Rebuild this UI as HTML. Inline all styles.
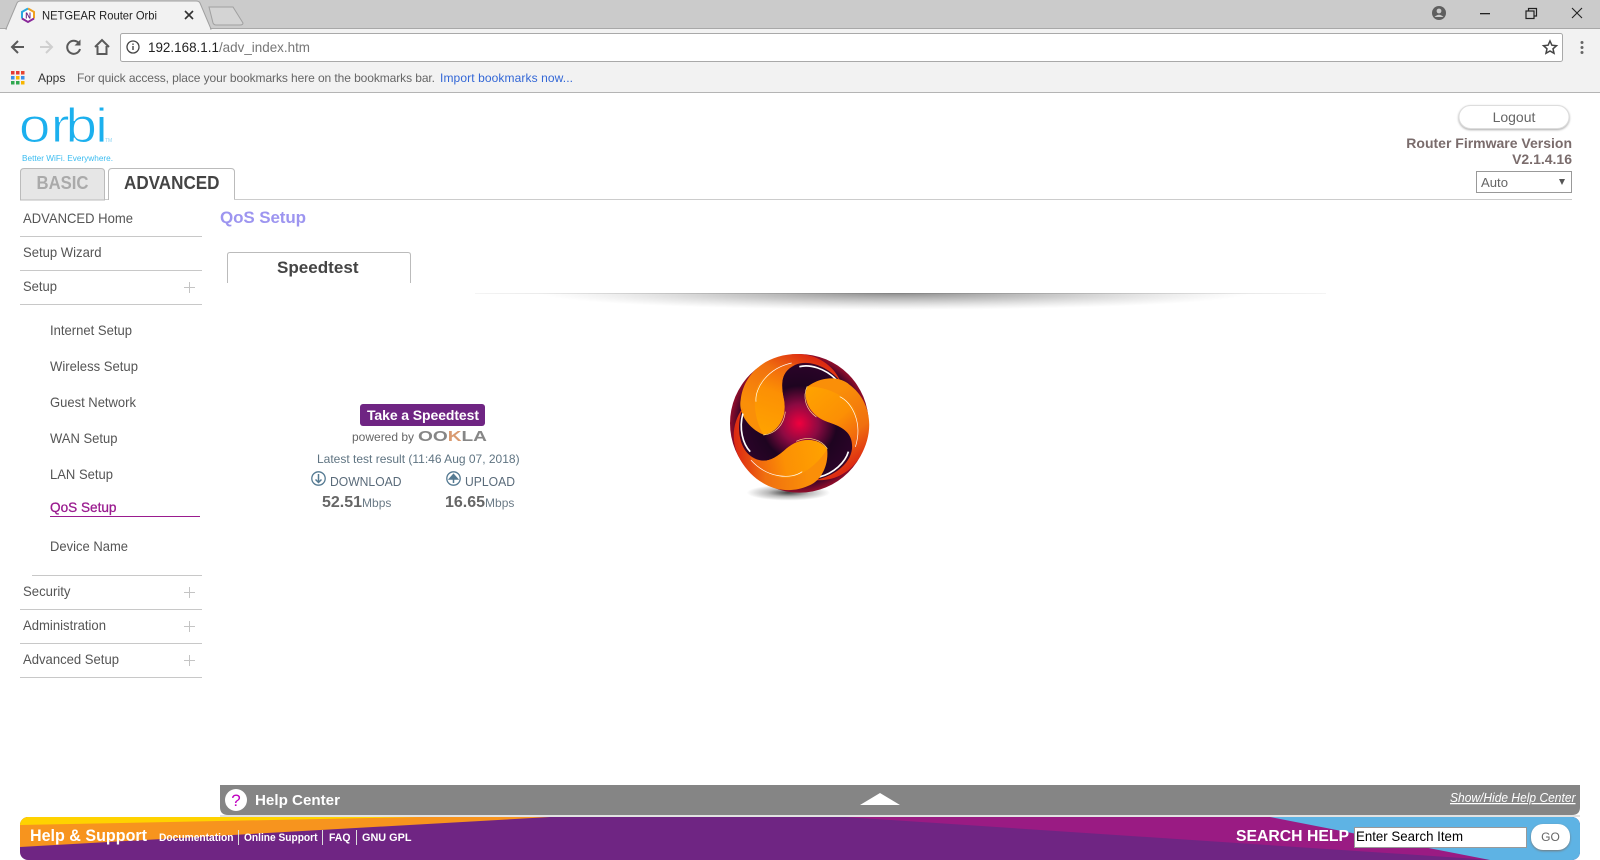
<!DOCTYPE html>
<html><head><meta charset="utf-8"><title>NETGEAR Router Orbi</title>
<style>
html,body{margin:0;padding:0;width:1600px;height:860px;overflow:hidden;background:#fff}
svg{display:block}
text{font-family:"Liberation Sans",sans-serif}
.m{font-size:14px;fill:#555}
.b{font-weight:bold}
.f{font-size:11px;font-weight:bold;fill:#fff}
</style></head><body>
<svg width="1600" height="860" viewBox="0 0 1600 860" xmlns="http://www.w3.org/2000/svg">
<defs>
<radialGradient id="sh" gradientUnits="userSpaceOnUse" cx="0" cy="0" r="1" gradientTransform="translate(895 293) scale(355 17)">
<stop offset="0" stop-color="#777" stop-opacity=".85"/><stop offset=".5" stop-color="#888" stop-opacity=".42"/><stop offset="1" stop-color="#aaa" stop-opacity="0"/></radialGradient>
<linearGradient id="ln"><stop offset="0" stop-color="#f4f4f4"/><stop offset=".5" stop-color="#bbb"/><stop offset="1" stop-color="#f4f4f4"/></linearGradient>
<radialGradient id="core" cx="268" cy="250" r="205" gradientUnits="userSpaceOnUse">
<stop offset="0" stop-color="#f0003e"/><stop offset=".28" stop-color="#8c0a42"/><stop offset=".55" stop-color="#1e0420"/><stop offset=".85" stop-color="#2a0428"/><stop offset="1" stop-color="#8a0c2a"/></radialGradient>
<linearGradient id="bl" x1="0.2" y1="0.7" x2="0.65" y2="0">
<stop offset="0" stop-color="#fa8f08"/><stop offset=".6" stop-color="#f0700f"/><stop offset="1" stop-color="#dd2a12"/></linearGradient>
<linearGradient id="bi" x1="0.4" y1="1" x2="0.6" y2="0">
<stop offset="0" stop-color="#ffa200"/><stop offset=".6" stop-color="#fc9004"/><stop offset="1" stop-color="#f0650f"/></linearGradient>
<radialGradient id="ds" cx=".5" cy=".5" r=".5"><stop offset="0" stop-color="#444"/><stop offset=".5" stop-color="#bbb"/><stop offset="1" stop-color="#fff"/></radialGradient>
<clipPath id="sc"><rect x="440" y="293" width="920" height="30"/></clipPath>
<clipPath id="bb"><rect x="20" y="817" width="1560" height="43" rx="8"/></clipPath>
<g id="blade">
<path d="M268 80 C300 72 345 85 378 118" fill="none" stroke="#fff" stroke-width="5"/>
<path d="M160 284 C110 262 85 215 92 180 C100 100 170 42 262 42 C320 42 370 75 392 125 C360 85 300 55 255 75 C215 95 210 125 222 180 C232 235 200 280 160 284 Z" fill="url(#bl)"/>
<path d="M160 284 C135 240 125 180 145 135 C165 95 205 72 255 72 C215 95 210 125 222 180 C232 235 200 280 160 284 Z" fill="url(#bi)"/>
<path d="M138 185 C134 145 172 85 245 69" fill="none" stroke="#fff" stroke-width="2"/>
<path d="M160 285 C195 282 222 255 226 215" fill="none" stroke="#ffe08a" stroke-width="2"/>
</g>
</defs>

<!-- browser chrome -->
<rect width="1600" height="28" fill="#cbcbcb"/>
<rect y="28" width="1600" height="64" fill="#f2f2f2"/>
<rect y="28" width="1600" height="1" fill="#a8a8a8"/>
<rect y="92" width="1600" height="1" fill="#b4b4b4"/>
<path d="M6 29 L17 3 Q18 1 21 1 L196 1 Q199 1 200 3 L211 29 Z" fill="#f2f2f2" stroke="#a0a0a0"/>
<rect x="7" y="28" width="203" height="2" fill="#f2f2f2"/>
<path d="M209 7 L233 7 L243 23 Q243 25 240 25 L216 25 Q214 25 213 23 Z" fill="#d4d4d4" stroke="#a0a0a0"/>
<path d="M28 8.500 L34 12 L34 18.500 L28 22 L22 18.500 L22 12 Z" fill="#fff"/>
<path d="M28 8.500 L34 12 L34 18.500" fill="none" stroke="#f0a020" stroke-width="2"/>
<path d="M22 18.500 L22 12 L28 8.500" fill="none" stroke="#2aa8e0" stroke-width="2"/>
<path d="M34 18.500 L28 22 L22 18.500" fill="none" stroke="#8a2a9a" stroke-width="2"/>
<text x="25.200" y="18.500" font-size="8" class="b" fill="#6f2583">N</text>
<text x="42" y="19.500" font-size="12" fill="#222" textLength="115" lengthAdjust="spacingAndGlyphs">NETGEAR Router Orbi</text>
<path d="M185 11 L193 19 M193 11 L185 19" stroke="#333" stroke-width="1.600"/>
<!-- window controls -->
<circle cx="1439" cy="13" r="7" fill="#5f5f5f"/><circle cx="1439" cy="11" r="2.400" fill="#cbcbcb"/><path d="M1434.500 17 Q1439 12.500 1443.500 17" fill="#cbcbcb"/>
<rect x="1480" y="13" width="10" height="1.300" fill="#222"/>
<rect x="1526" y="11" width="8" height="7.500" fill="none" stroke="#222" stroke-width="1.200"/><path d="M1528.500 11 V8.500 H1536.500 V16 H1534" fill="none" stroke="#222" stroke-width="1.200"/>
<path d="M1572 8 L1582 18 M1582 8 L1572 18" stroke="#222" stroke-width="1.100"/>
<!-- nav -->
<path d="M24 47 H12 M18 41 L12 47 L18 53" fill="none" stroke="#5a5a5a" stroke-width="2"/>
<path d="M52 47 H40 M46 41 L52 47 L46 53" fill="none" stroke="#cfcfcf" stroke-width="2"/>
<path d="M79 43.500 A6.500 6.500 0 1 0 80 49" fill="none" stroke="#5a5a5a" stroke-width="2"/><path d="M80.500 39.500 V45.500 H74.500 Z" fill="#5a5a5a"/>
<path d="M95 47 L102 40 L109 47 M97.500 46 V54 H106.500 V46" fill="none" stroke="#5a5a5a" stroke-width="2"/>
<rect x="120.500" y="33.500" width="1442" height="28" rx="2" fill="#fff" stroke="#a9a9a9"/>
<circle cx="133" cy="47" r="6" fill="none" stroke="#444" stroke-width="1.300"/><rect x="132.300" y="46" width="1.400" height="4" fill="#444"/><rect x="132.300" y="43.500" width="1.400" height="1.400" fill="#444"/>
<text x="148" y="52" font-size="14" fill="#222" textLength="162" lengthAdjust="spacingAndGlyphs">192.168.1.1<tspan fill="#777">/adv_index.htm</tspan></text>
<path d="M1550 41 L1551.900 45.200 L1556.500 45.700 L1553 48.800 L1554 53.300 L1550 51 L1546 53.300 L1547 48.800 L1543.500 45.700 L1548.100 45.200 Z" fill="none" stroke="#444" stroke-width="1.500"/>
<circle cx="1582" cy="42.500" r="1.500" fill="#666"/><circle cx="1582" cy="47.500" r="1.500" fill="#666"/><circle cx="1582" cy="52.500" r="1.500" fill="#666"/>
<!-- apps grid -->
<g>
<rect x="11" y="71" width="3.500" height="3.500" fill="#e53935"/><rect x="16" y="71" width="3.500" height="3.500" fill="#e53935"/><rect x="21" y="71" width="3.500" height="3.500" fill="#e8432e"/>
<rect x="11" y="76" width="3.500" height="3.500" fill="#3a8ee8"/><rect x="16" y="76" width="3.500" height="3.500" fill="#f7b500"/><rect x="21" y="76" width="3.500" height="3.500" fill="#3a8ee8"/>
<rect x="11" y="81" width="3.500" height="3.500" fill="#2fa84f"/><rect x="16" y="81" width="3.500" height="3.500" fill="#2fa84f"/><rect x="21" y="81" width="3.500" height="3.500" fill="#f7b500"/>
</g>
<text x="38" y="82" font-size="12" fill="#333">Apps</text>
<text x="77" y="82" font-size="12" fill="#666" textLength="358" lengthAdjust="spacing">For quick access, place your bookmarks here on the bookmarks bar.</text>
<text x="440" y="82" font-size="12" fill="#3367d6" textLength="133" lengthAdjust="spacing">Import bookmarks now...</text>

<!-- logo -->
<text transform="scale(1.18 1)" x="16 43 55.500 80.700" y="142" font-size="48" fill="#1cb0ee" stroke="#fff" stroke-width=".9">orbi</text>
<text x="105" y="142" font-size="5" fill="#8fd4f2">TM</text>
<text x="22" y="161" font-size="8.500" fill="#3bbcf0" textLength="91" lengthAdjust="spacingAndGlyphs">Better WiFi. Everywhere.</text>

<!-- top right -->
<rect x="1459" y="105.500" width="110" height="23" rx="11.500" fill="#fff" stroke="#ddd" style="filter:drop-shadow(0 1px 1px #aaa)"/>
<text x="1514" y="122" font-size="14" fill="#666" text-anchor="middle">Logout</text>
<text x="1572" y="148" font-size="14" class="b" fill="#7a6c6c" text-anchor="end">Router Firmware Version</text>
<text x="1572" y="164" font-size="14" class="b" fill="#7a6c6c" text-anchor="end">V2.1.4.16</text>
<rect x="1476.500" y="171.500" width="95" height="21" fill="#fff" stroke="#999"/>
<text x="1481" y="187" font-size="13" fill="#666" textLength="27" lengthAdjust="spacingAndGlyphs">Auto</text>
<path d="M1559 179 H1565 L1562 185 Z" fill="#555"/>

<!-- tabs -->
<rect x="20" y="199" width="1552" height="1" fill="#ccc"/>
<path d="M20.500 200 V172 Q20.500 168.500 24 168.500 H101 Q104.500 168.500 104.500 172 V200 Z" fill="#e6e6e6" stroke="#bbb"/>
<path d="M108.500 200 V172 Q108.500 168.500 112 168.500 H231 Q234.500 168.500 234.500 172 V199" fill="#fff" stroke="#bbb"/>
<rect x="109" y="199" width="125" height="2" fill="#fff"/>
<text x="36.500" y="189" font-size="18" class="b" fill="#aaa" textLength="52" lengthAdjust="spacingAndGlyphs">BASIC</text>
<text x="124" y="189" font-size="18" class="b" fill="#444" textLength="95.500" lengthAdjust="spacingAndGlyphs">ADVANCED</text>

<!-- menu -->
<g>
<text x="23" y="223" class="m" textLength="110" lengthAdjust="spacingAndGlyphs">ADVANCED Home</text>
<text x="23" y="257" class="m" textLength="78.500" lengthAdjust="spacingAndGlyphs">Setup Wizard</text>
<text x="23" y="291" class="m" textLength="34" lengthAdjust="spacingAndGlyphs">Setup</text>
<text x="50" y="335" class="m" textLength="82" lengthAdjust="spacingAndGlyphs">Internet Setup</text>
<text x="50" y="371" class="m" textLength="88" lengthAdjust="spacingAndGlyphs">Wireless Setup</text>
<text x="50" y="407" class="m" textLength="86" lengthAdjust="spacingAndGlyphs">Guest Network</text>
<text x="50" y="443" class="m" textLength="67.500" lengthAdjust="spacingAndGlyphs">WAN Setup</text>
<text x="50" y="479" class="m" textLength="63" lengthAdjust="spacingAndGlyphs">LAN Setup</text>
<text x="50" y="512" font-size="14" fill="#9a1b8f" stroke="#9a1b8f" stroke-width=".3" textLength="66.500" lengthAdjust="spacingAndGlyphs">QoS Setup</text>
<text x="50" y="551" class="m" textLength="78" lengthAdjust="spacingAndGlyphs">Device Name</text>
<text x="23" y="596" class="m" textLength="47.500" lengthAdjust="spacingAndGlyphs">Security</text>
<text x="23" y="630" class="m" textLength="83" lengthAdjust="spacingAndGlyphs">Administration</text>
<text x="23" y="664" class="m" textLength="96" lengthAdjust="spacingAndGlyphs">Advanced Setup</text>
<g fill="#c8c8c8">
<rect x="20" y="236" width="182" height="1"/><rect x="20" y="270" width="182" height="1"/><rect x="20" y="304" width="182" height="1"/>
<rect x="32" y="575" width="170" height="1"/><rect x="20" y="609" width="182" height="1"/><rect x="20" y="643" width="182" height="1"/><rect x="20" y="677" width="182" height="1"/>
</g>
<rect x="50" y="516" width="150" height="1" fill="#9a1b8f"/>
<path d="M184 287.500 H195 M189.500 282 V293 M184 592.500 H195 M189.500 587 V598 M184 626.500 H195 M189.500 621 V632 M184 660.500 H195 M189.500 655 V666" stroke="#c4c4c4" stroke-width="1"/>
</g>

<!-- content -->
<text x="220" y="223" font-size="17" class="b" fill="#9d95f0" textLength="86" lengthAdjust="spacing">QoS Setup</text>
<path d="M227.500 283 V255 Q227.500 252.500 230 252.500 H408 Q410.500 252.500 410.500 255 V283" fill="#fff" stroke="#bbb"/>
<text x="277" y="273" font-size="17" class="b" fill="#444" textLength="81.500" lengthAdjust="spacingAndGlyphs">Speedtest</text>
<rect x="475" y="293" width="851" height="1" fill="url(#ln)"/>
<g clip-path="url(#sc)"><ellipse cx="895" cy="293" rx="355" ry="17" fill="url(#sh)"/></g>

<!-- speedtest block -->
<rect x="360" y="404" width="125" height="22" rx="3" fill="#6f2583"/>
<text x="367" y="420" font-size="14" class="b" fill="#fff" textLength="112" lengthAdjust="spacing">Take a Speedtest</text>
<text x="352" y="441" font-size="12" fill="#666">powered by</text>
<text x="418" y="441" font-size="14.500" font-weight="bold" fill="#868686" textLength="69" lengthAdjust="spacingAndGlyphs">OO<tspan fill="#d99a70">K</tspan>LA</text>
<text x="317" y="463" font-size="12" fill="#5f7482">Latest test result (11:46 Aug 07, 2018)</text>
<circle cx="318.500" cy="478.500" r="6.700" fill="none" stroke="#557a92" stroke-width="1.300"/>
<path d="M318.500 474 V482 M315.500 479.500 L318.500 482.500 L321.500 479.500" fill="none" stroke="#557a92" stroke-width="1.500"/>
<text x="330" y="486" font-size="13" fill="#5a6b7a" textLength="71.500" lengthAdjust="spacingAndGlyphs">DOWNLOAD</text>
<circle cx="453.500" cy="478.500" r="6.700" fill="none" stroke="#557a92" stroke-width="1.300"/>
<path d="M453.500 483 V477 M449.500 479 L453.500 474.500 L457.500 479 Z" fill="#557a92" stroke="#557a92" stroke-width="1.500"/>
<text x="465" y="486" font-size="13" fill="#5a6b7a" textLength="50" lengthAdjust="spacingAndGlyphs">UPLOAD</text>
<text x="322" y="507" font-size="16" class="b" fill="#666">52.51<tspan font-size="12" font-weight="normal" fill="#6a7a86">Mbps</tspan></text>
<text x="445" y="507" font-size="16" class="b" fill="#666">16.65<tspan font-size="12" font-weight="normal" fill="#6a7a86">Mbps</tspan></text>

<!-- spiral logo -->
<svg x="710" y="340" width="180" height="175" viewBox="0 0 540 525">
<ellipse cx="235" cy="458" rx="125" ry="24" fill="url(#ds)"/>
<circle cx="268" cy="250" r="208" fill="url(#core)"/>
<use href="#blade"/>
<use href="#blade" transform="rotate(120 268 250)"/>
<use href="#blade" transform="rotate(240 268 250)"/>
</svg>

<!-- help center -->
<path d="M220 785 H1580 V807 Q1580 815 1572 815 H228 Q220 815 220 807 Z" fill="#858585"/>
<rect x="220" y="815" width="1360" height="2" fill="#e2e2e2"/>
<circle cx="236" cy="800" r="11" fill="#fff"/>
<text x="236" y="806" font-size="17" fill="#c000c0" text-anchor="middle">?</text>
<text x="255" y="805" font-size="15" class="b" fill="#fff" textLength="85" lengthAdjust="spacingAndGlyphs">Help Center</text>
<path d="M860 805 L880 793 L900 805 Z" fill="#fff"/>
<text x="1450" y="802" font-size="12.500" font-style="italic" fill="#fff" text-decoration="underline" textLength="125.500" lengthAdjust="spacingAndGlyphs">Show/Hide Help Center</text>

<!-- bottom bar -->
<g clip-path="url(#bb)">
<rect x="20" y="817" width="1560" height="43" fill="#6f2583"/>
<path d="M20 817 H550 L20 847 Z" fill="#f7941e"/>
<path d="M20 817 H420 L20 825 Z" fill="#ffd200"/>
<path d="M845 817 H1272 L1492 860 Z" fill="#9a1b83"/>
<path d="M1270 817 H1580 V860 H1490 Z" fill="#5eb3e4"/>
</g>
<text x="30" y="841" font-size="17" class="b" fill="#fff" textLength="117" lengthAdjust="spacingAndGlyphs">Help &amp; Support</text>
<text x="159" y="841" class="f" textLength="74.500" lengthAdjust="spacingAndGlyphs">Documentation</text>
<text x="244" y="841" class="f" textLength="73.500" lengthAdjust="spacingAndGlyphs">Online Support</text>
<text x="329" y="841" class="f" textLength="21.500" lengthAdjust="spacingAndGlyphs">FAQ</text>
<text x="362" y="841" class="f" textLength="49.500" lengthAdjust="spacingAndGlyphs">GNU GPL</text>
<rect x="238" y="830" width="1" height="15" fill="#ddd"/><rect x="322" y="830" width="1" height="15" fill="#ddd"/><rect x="356" y="830" width="1" height="15" fill="#ddd"/>
<text x="1236" y="841" font-size="16" class="b" fill="#fff" textLength="113" lengthAdjust="spacingAndGlyphs">SEARCH HELP</text>
<rect x="1354.500" y="827.500" width="172" height="20" fill="#fff" stroke="#999"/>
<text x="1356" y="841" font-size="14" fill="#000" textLength="107" lengthAdjust="spacingAndGlyphs">Enter Search Item</text>
<rect x="1531" y="824" width="39" height="26" rx="12" fill="#fff" style="filter:drop-shadow(0 1px 1px #777)"/>
<text x="1550.500" y="841" font-size="12" fill="#666" text-anchor="middle">GO</text>
</svg>
</body></html>
